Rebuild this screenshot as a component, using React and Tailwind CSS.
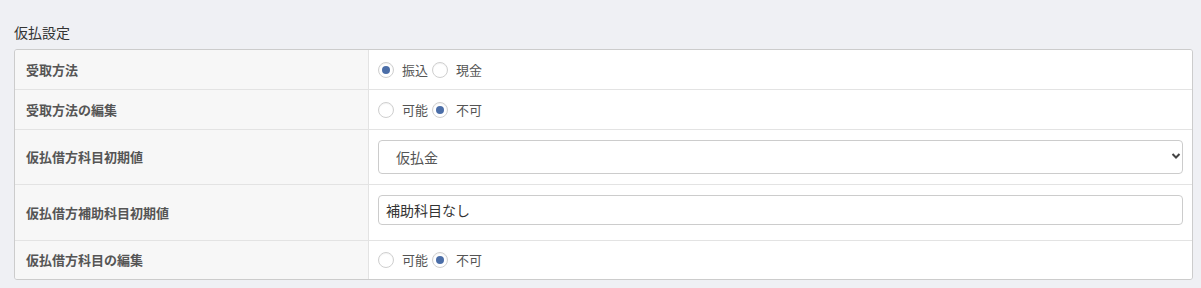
import React from "react";

const font = { fontFamily: '"Noto Sans CJK JP", "Noto Sans", sans-serif' };

function Radio({ checked, label }) {
  return (
    <label className="flex items-center">
      <span className="w-[16px] h-[16px] rounded-full border border-[#cfcfcf] bg-white flex items-center justify-center shadow-[inset_0_1px_1px_rgba(0,0,0,0.05)]">
        {checked && <span className="w-[8px] h-[8px] rounded-full bg-[#4b6ea8]" />}
      </span>
      <span className="ml-[8px] mr-[4px] text-[13px] text-[#555]">{label}</span>
    </label>
  );
}

function Row({ label, h, last, children, valueClass = "" }) {
  return (
    <div className={`flex ${last ? "" : "border-b border-[#e3e3e3]"}`}>
      <div className={`w-[354px] shrink-0 bg-[#f7f7f7] border-r border-[#e3e3e3] pl-[11px] flex items-center text-[13px] font-bold text-[#555] ${h}`}>
        {label}
      </div>
      <div className={`flex-1 bg-white pl-[9px] pr-[9px] flex items-center ${valueClass}`}>{children}</div>
    </div>
  );
}

export default function App() {
  return (
    <div className="w-[1201px] h-[288px] bg-[#eff0f4] pl-[14px] pr-[8px] pt-[21px]" style={font}>
      <div className="text-[14px] text-[#333] leading-[22px] mb-[6px]">仮払設定</div>
      <div className="border border-[#cccccc] rounded-[3px] overflow-hidden">
        <Row label="受取方法" h="h-[39px]">
          <Radio checked label="振込" />
          <Radio label="現金" />
        </Row>
        <Row label="受取方法の編集" h="h-[39px]">
          <Radio label="可能" />
          <Radio checked label="不可" />
        </Row>
        <Row label="仮払借方科目初期値" h="h-[54px]">
          <div className="relative w-full">
            <div className="h-[34px] w-full border border-[#cccccc] rounded-[4px] bg-white flex items-center pl-[17px] text-[14px] text-[#555]">
              仮払金
            </div>
            <svg className="absolute right-[2px] top-[12px]" width="10" height="8" viewBox="0 0 10 8">
              <path d="M1.5 2 L5 5.5 L8.5 2" fill="none" stroke="#444" strokeWidth="2" />
            </svg>
          </div>
        </Row>
        <Row label="仮払借方補助科目初期値" h="h-[55px]" valueClass="items-start pt-[10px]">
          <div className="h-[30px] w-full border border-[#cccccc] rounded-[4px] bg-white flex items-center pl-[7px] text-[14px] text-[#333]">
            補助科目なし
          </div>
        </Row>
        <Row label="仮払借方科目の編集" h="h-[38px]" last>
          <Radio label="可能" />
          <Radio checked label="不可" />
        </Row>
      </div>
    </div>
  );
}
